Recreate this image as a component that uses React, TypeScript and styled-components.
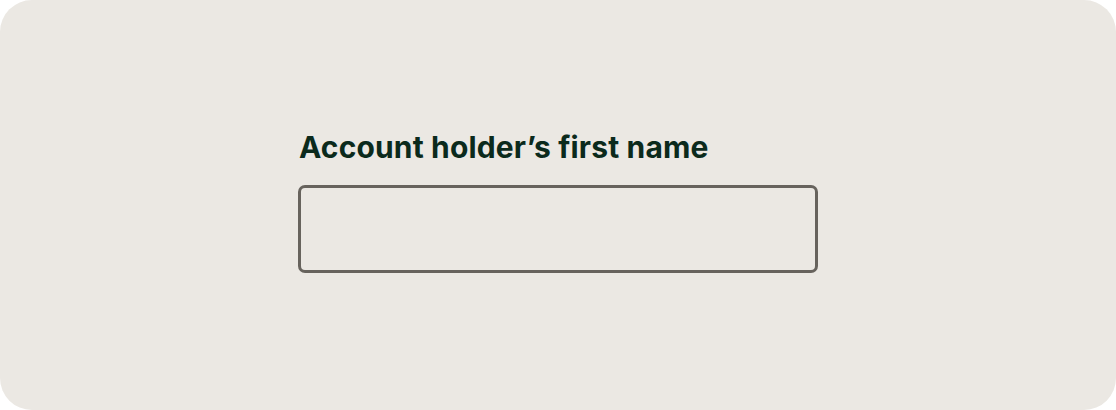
import * as React from 'react'
import styled, { createGlobalStyle } from 'styled-components'

const GlobalStyle = createGlobalStyle`
  html, body {
    margin: 0;
    padding: 0;
    background: #ffffff;
  }
`

const Panel = styled.div`
  width: 1116px;
  height: 410px;
  box-sizing: border-box;
  background-color: #ebe8e3;
  border-radius: 32px;
  display: flex;
  align-items: center;
  justify-content: center;
  font-family: Inter, "Liberation Sans", sans-serif;
`

const Field = styled.div`
  width: 520px;
  display: flex;
  flex-direction: column;
  gap: 20px;
  margin-top: -8px;
`

const Label = styled.label`
  font-size: 30px;
  font-weight: 700;
  line-height: 36px;
  color: #0b2a1c;
  letter-spacing: 0.15px;
  padding-left: 1px;
`

const Input = styled.input`
  height: 88px;
  box-sizing: border-box;
  border: 3px solid #67635d;
  border-radius: 7px;
  background: transparent;
  font: inherit;
  font-size: 24px;
  padding: 0 20px;
  color: #0b2a1c;
  outline: none;
`

const App = () => (
  <>
    <GlobalStyle />
    <Panel>
      <Field>
        <Label htmlFor="first-name">Account holder’s first name</Label>
        <Input id="first-name" type="text" />
      </Field>
    </Panel>
  </>
)

export default App
